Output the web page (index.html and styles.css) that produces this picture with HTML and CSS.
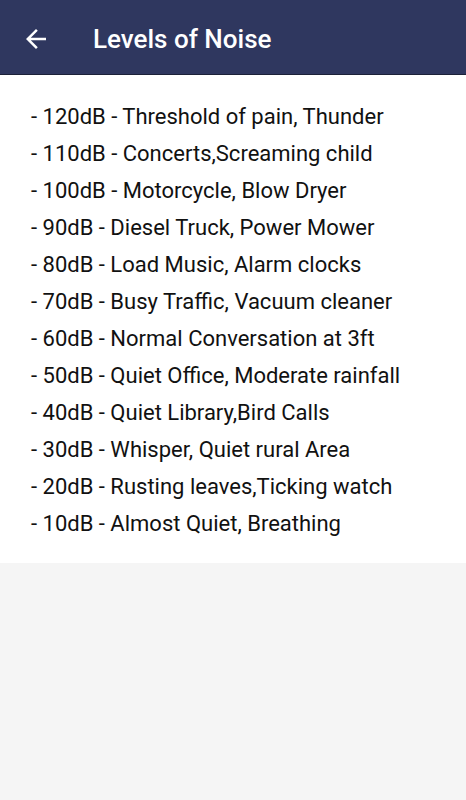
FILE: index.html
```html
<!DOCTYPE html>
<html lang="en">
<head>
    <meta charset="UTF-8">
    <meta name="viewport" content="width=device-width, initial-scale=1.0">
    <title>Levels of Noise</title>
    <link rel="stylesheet" href="styles.css">
</head>
<body>

<div class="topbar">
    <svg class="back" width="30" height="30" viewBox="0 0 24 24">
        <path d="M20 11H7.83l5.59-5.59L12 4l-8 8 8 8 1.41-1.41L7.83 13H20v-2z" fill="#fff"/>
    </svg>
    <h1 class="title">Levels of Noise</h1>
</div>

<div class="card">
    <p>- 120dB - Threshold of pain, Thunder</p>
    <p>- 110dB - Concerts,Screaming child</p>
    <p>- 100dB - Motorcycle, Blow Dryer</p>
    <p>- 90dB - Diesel Truck, Power Mower</p>
    <p>- 80dB - Load Music, Alarm clocks</p>
    <p>- 70dB - Busy Traffic, Vacuum cleaner</p>
    <p>- 60dB - Normal Conversation at 3ft</p>
    <p>- 50dB - Quiet Office, Moderate rainfall</p>
    <p>- 40dB - Quiet Library,Bird Calls</p>
    <p>- 30dB - Whisper, Quiet rural Area</p>
    <p>- 20dB - Rusting leaves,Ticking watch</p>
    <p>- 10dB - Almost Quiet, Breathing</p>
</div>

</body>
</html>
```

FILE: styles.css
```css
*{
    margin: 0;
    padding: 0;
    box-sizing: border-box;
}
html, body{
    height: 100%;
}
body{
    font-family: Roboto, "Noto Sans", sans-serif;
    background: #f5f5f5;
}

.topbar{
    height: 75px;
    background: #2f375f;
    border-bottom: 1px solid #1c2138;
    display: flex;
    align-items: center;
    padding-left: 21px;
    padding-top: 4px;
}
.back{
    flex-shrink: 0;
}
.title{
    margin-left: 42px;
    color: #fff;
    font-size: 26px;
    font-weight: 500;
}

.card{
    background: #fff;
    height: 488px;
    padding: 23px 0 0 31px;
}
.card p{
    font-size: 22px;
    line-height: 37px;
    color: #111;
}
```
